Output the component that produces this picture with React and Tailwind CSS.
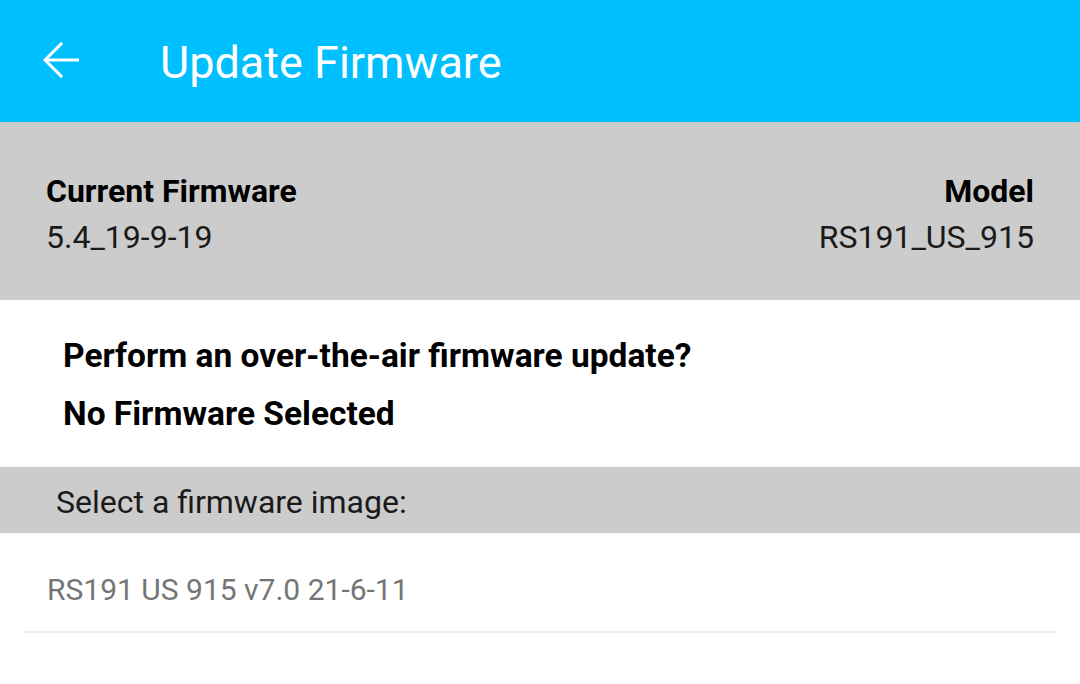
const FIRMWARE_IMAGES = ['RS191 US 915 v7.0 21-6-11'];

function BackArrow() {
    return (
        <svg width="36" height="36" viewBox="0 0 36 36" fill="none" stroke="white" strokeWidth="3" strokeLinecap="square">
            <path d="M35 18H3" />
            <path d="M18 2L2 18l16 16" />
        </svg>
    );
}

export default function App() {
    return (
        <div className="w-[1080px] h-[684px] bg-white overflow-hidden font-['Roboto',sans-serif]">
            {/* Toolbar */}
            <div className="h-[122px] bg-[#00bfff] flex items-center">
                <button className="ml-[43px] mt-[-2px]">
                    <BackArrow />
                </button>
                <h1 className="ml-[81px] text-[45px] text-white leading-none mt-[2px]">
                    Update Firmware
                </h1>
            </div>

            {/* Device info */}
            <div className="h-[178px] bg-[#cccccc] px-[46px] pt-[52px] flex justify-between text-black">
                <div>
                    <div className="text-[32px] font-bold leading-[34px]">
                        Current Firmware
                    </div>
                    <div className="text-[32px] leading-[34px] mt-[12px] text-[#1a1a1a]">
                        5.4_19-9-19
                    </div>
                </div>
                <div className="text-right">
                    <div className="text-[32px] font-bold leading-[34px]">
                        Model
                    </div>
                    <div className="text-[32px] leading-[34px] mt-[12px] text-[#1a1a1a]">
                        RS191_US_915
                    </div>
                </div>
            </div>

            {/* Prompt */}
            <div className="h-[167px] pl-[63px] pt-[36px] text-black">
                <div className="text-[33.5px] font-bold leading-[40px]">
                    Perform an over-the-air firmware update?
                </div>
                <div className="text-[33.5px] font-bold leading-[40px] mt-[18px]">
                    No Firmware Selected
                </div>
            </div>

            {/* Section header */}
            <div className="h-[66px] bg-[#cccccc] pl-[56px] flex items-center">
                <span className="text-[32px] text-[#1a1a1a] leading-none mt-[4px]">
                    Select a firmware image:
                </span>
            </div>

            {/* Image list */}
            <ul>
                {FIRMWARE_IMAGES.map((name) => (
                    <li key={name} className="mx-[23px] h-[100px] border-b-2 border-[#eeeeee] flex items-center pl-[24px] pt-[16px]">
                        <span className="text-[30px] text-[#757575] leading-none">{name}</span>
                    </li>
                ))}
            </ul>
        </div>
    );
}
